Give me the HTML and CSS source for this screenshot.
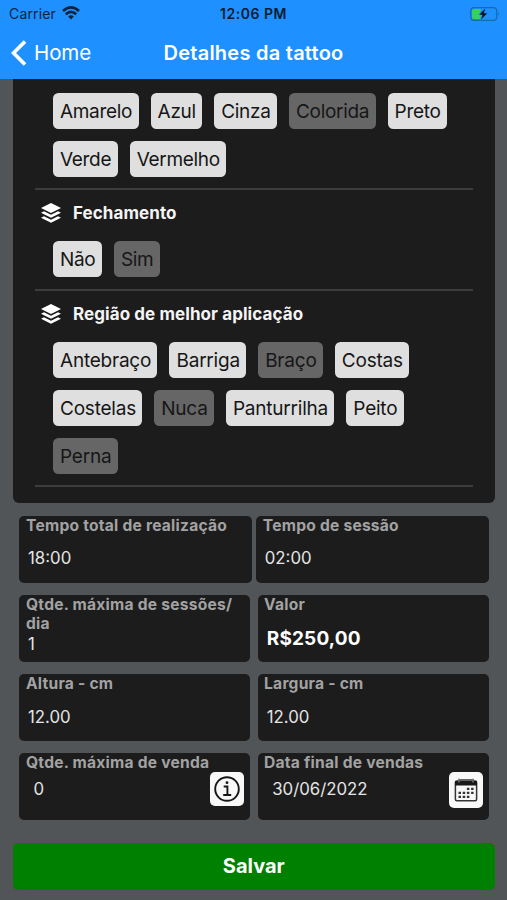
FILE: index.html
```html
<!DOCTYPE html>
<html lang="pt-BR">
<head>
<meta charset="utf-8">
<title>Detalhes da tattoo</title>
<link rel="stylesheet" href="styles.css">
</head>
<body>
<header class="header">
  <div class="status">
    <div class="carrier"><span>Carrier</span>
      <svg width="18" height="14" viewBox="0 0 18 14" fill="none" stroke="#0b2440" stroke-width="2.7"><path d="M1 5.1Q9-2.2 17 5.1M3.8 8.3Q9 3.5 14.2 8.3"/><path d="M6.1 10.4Q9 7.9 11.9 10.4L9 13.5Z" fill="#0b2440" stroke="none"/></svg>
    </div>
    <time>12:06 PM</time>
    <svg class="battery" width="30" height="14" viewBox="0 0 30 14"><rect x=".7" y=".7" width="26" height="12.6" rx="3.3" fill="none" stroke="#1769b5" stroke-width="1.2"/><path d="M3.5 2H11L9 8H11L10 12H3.5Q2 12 2 10.5V3.5Q2 2 3.5 2Z" fill="#35d15b"/><path d="M15.3 1.5 9.2 7.8H12.6L11.1 12.5 17.2 6.2H13.7Z" fill="#08131f"/><path d="M28.2 4.8Q30 7 28.2 9.2Z" fill="#1769b5"/></svg>
  </div>
  <nav class="nav">
    <a class="back"><svg width="16" height="26" viewBox="0 0 16 26" fill="none" stroke="#fff" stroke-width="3.7"><path d="M14 1.5 2.5 13 14 24.5"/></svg><span>Home</span></a>
    <h1>Detalhes da tattoo</h1>
  </nav>
</header>
<main>
  <section class="panel">
    <div class="chips">
      <span class="chip">Amarelo</span><span class="chip">Azul</span><span class="chip">Cinza</span><span class="chip off">Colorida</span><span class="chip">Preto</span><span class="chip">Verde</span><span class="chip">Vermelho</span>
    </div>
    <div class="group">
      <h2><svg width="22" height="20" viewBox="0 0 22 20" fill="#fff"><path d="M11 0 21 5 11 10 1 5Z"/><path d="M1 9.8 4 8.3 11 11.8 18 8.3 21 9.8 11 14.8Z"/><path d="M1 14.7 4 13.2 11 16.7 18 13.2 21 14.7 11 19.8Z"/></svg>Fechamento</h2>
      <div class="chips"><span class="chip">Não</span><span class="chip off">Sim</span></div>
    </div>
    <div class="group last">
      <h2><svg width="22" height="20" viewBox="0 0 22 20" fill="#fff"><path d="M11 0 21 5 11 10 1 5Z"/><path d="M1 9.8 4 8.3 11 11.8 18 8.3 21 9.8 11 14.8Z"/><path d="M1 14.7 4 13.2 11 16.7 18 13.2 21 14.7 11 19.8Z"/></svg>Região de melhor aplicação</h2>
      <div class="chips"><span class="chip">Antebraço</span><span class="chip">Barriga</span><span class="chip off">Braço</span><span class="chip">Costas</span><span class="chip">Costelas</span><span class="chip off">Nuca</span><span class="chip">Panturrilha</span><span class="chip">Peito</span><span class="chip off">Perna</span></div>
    </div>
  </section>
  <section class="fields">
    <div class="row tight">
      <div class="field"><label>Tempo total de realização</label><p>18:00</p></div>
      <div class="field"><label>Tempo de sessão</label><p>02:00</p></div>
    </div>
    <div class="row">
      <div class="field"><label>Qtde. máxima de sessões/<br>dia</label><p class="low">1</p></div>
      <div class="field"><label>Valor</label><p class="price">R$250,00</p></div>
    </div>
    <div class="row">
      <div class="field"><label>Altura - cm</label><p>12.00</p></div>
      <div class="field"><label>Largura - cm</label><p>12.00</p></div>
    </div>
    <div class="row">
      <div class="field action"><label>Qtde. máxima de venda</label><div class="line"><p>0</p>
        <button class="icon"><svg width="26" height="26" viewBox="0 0 26 26" fill="none" stroke="#161616" stroke-width="1.9"><circle cx="13" cy="13" r="11.8"/><path d="M9.7 10.5H13.4V19M9.2 19H17.2"/><circle cx="13" cy="6.7" r="1.4" fill="#161616" stroke="none"/></svg></button></div></div>
      <div class="field action"><label>Data final de vendas</label><div class="line"><p>30/06/2022</p>
        <button class="icon tall"><svg width="24" height="24" viewBox="0 0 24 24"><rect x="1.4" y="3" width="21.2" height="19.8" rx="1.5" fill="#f8f8f8" stroke="#333" stroke-width="1.5"/><path d="M1 3H23V7.5H1Z" fill="#181818"/><path d="M5 .8V4.5M19 .8V4.5M6 2H18" stroke="#666" stroke-width="1.8"/><path d="M12.9 10.8H20.4M4.5 14.8H20.4M4.5 18.8H16.2" stroke="#333" stroke-width="2.3" stroke-dasharray="2.5 1.7"/></svg></button></div></div>
    </div>
  </section>
  <button class="save">Salvar</button>
</main>
</body>
</html>
```
FILE: styles.css
```css
* { box-sizing: border-box; }
body { margin: 0; height: 900px; overflow: hidden; background: #525557; font-family: Inter, "Liberation Sans", sans-serif; }
h1, h2, p { margin: 0; }
button { border: 0; padding: 0; font-family: inherit; }
svg { display: block; flex: none; }
.header { height: 79px; background: #1e90ff; }
.status { height: 27px; padding: 0 7px 0 9px; display: grid; grid-template-columns: 1fr auto 1fr; align-items: center; color: #0b2440; font-size: 14px; letter-spacing: .15px; }
.status time { font-weight: 600; font-size: 14px; letter-spacing: .5px; margin-right: 2px; color: #0a1c30; }
.carrier { display: flex; align-items: center; gap: 6px; }
.carrier svg { margin-top: -1px; }
.battery { justify-self: end; }
.nav { height: 51px; display: grid; grid-template-columns: 1fr auto 1fr; align-items: center; padding: 0 11px; color: #fff; }
.back { display: flex; align-items: center; gap: 7px; font-size: 20.5px; letter-spacing: -.1px; }
h1 { font-size: 20px; font-weight: 600; letter-spacing: .25px; }
main { padding: 0 12.5px 0 13px; }
.panel { height: 424px; padding: 14px 22px 0; background: #1c1c1c; border-radius: 0 0 6px 6px; }
.chips { display: flex; flex-wrap: wrap; gap: 12px; padding: 0 18px 12px; }
.chip { height: 36px; padding: 0 6.5px 0 7px; border-radius: 5.5px; background: #dfdfdf; color: #161616; font-size: 19px; line-height: 37px; letter-spacing: -.32px; white-space: nowrap; }
.last .chip { letter-spacing: -.22px; padding-right: 6.3px; }
.off { background: #666; }
.group { border-top: 2px solid #3d3d3d; height: 101px; margin-top: -1px; }
.last { height: 198px; margin-top: 0; border-bottom: 2px solid #3d3d3d; }
h2 { display: flex; align-items: center; gap: 11px; height: 45px; padding-left: 5px; margin-bottom: 6px; font-size: 17px; font-weight: 700; letter-spacing: .08px; color: #f4f4f4; }
.fields { display: grid; gap: 12.3px; padding: 12.5px 6px 0; }
.row { display: grid; grid-template-columns: 1fr 1fr; gap: 8px; }
.tight { gap: 4px; }
.field { display: flex; flex-direction: column; height: 67px; padding: 0 6px 0 7px; border-radius: 5px; background: #1c1c1c; }
.field label { font-size: 15.6px; line-height: 19px; font-weight: 700; letter-spacing: .23px; color: #a2a2a2; white-space: nowrap; }
.field p { margin: 13px 0 0 2px; font-size: 16.8px; line-height: 22px; color: #e5e5e5; }
.tight .field p { margin-top: 12px; }
.field .low { margin-top: 0; }
.field .price { margin-top: 14px; font-size: 19px; font-weight: 700; letter-spacing: .15px; color: #fff; }
.row:not(.tight) .field:nth-child(2) label { margin-left: -.7px; }
.line { display: flex; justify-content: space-between; align-items: flex-start; }
.field .line p { margin: 6px 0 0 7.5px; }
.icon { display: grid; place-items: center; width: 34px; height: 34px; border-radius: 5px; background: #f8f8f8; }
.action { padding-right: 5.5px; }
.tall { height: 36px; }
.save { display: block; width: 100%; height: 47px; margin-top: 22.6px; border-radius: 5px; background: #008000; color: #fff; font-size: 20px; font-weight: 700; }
```
